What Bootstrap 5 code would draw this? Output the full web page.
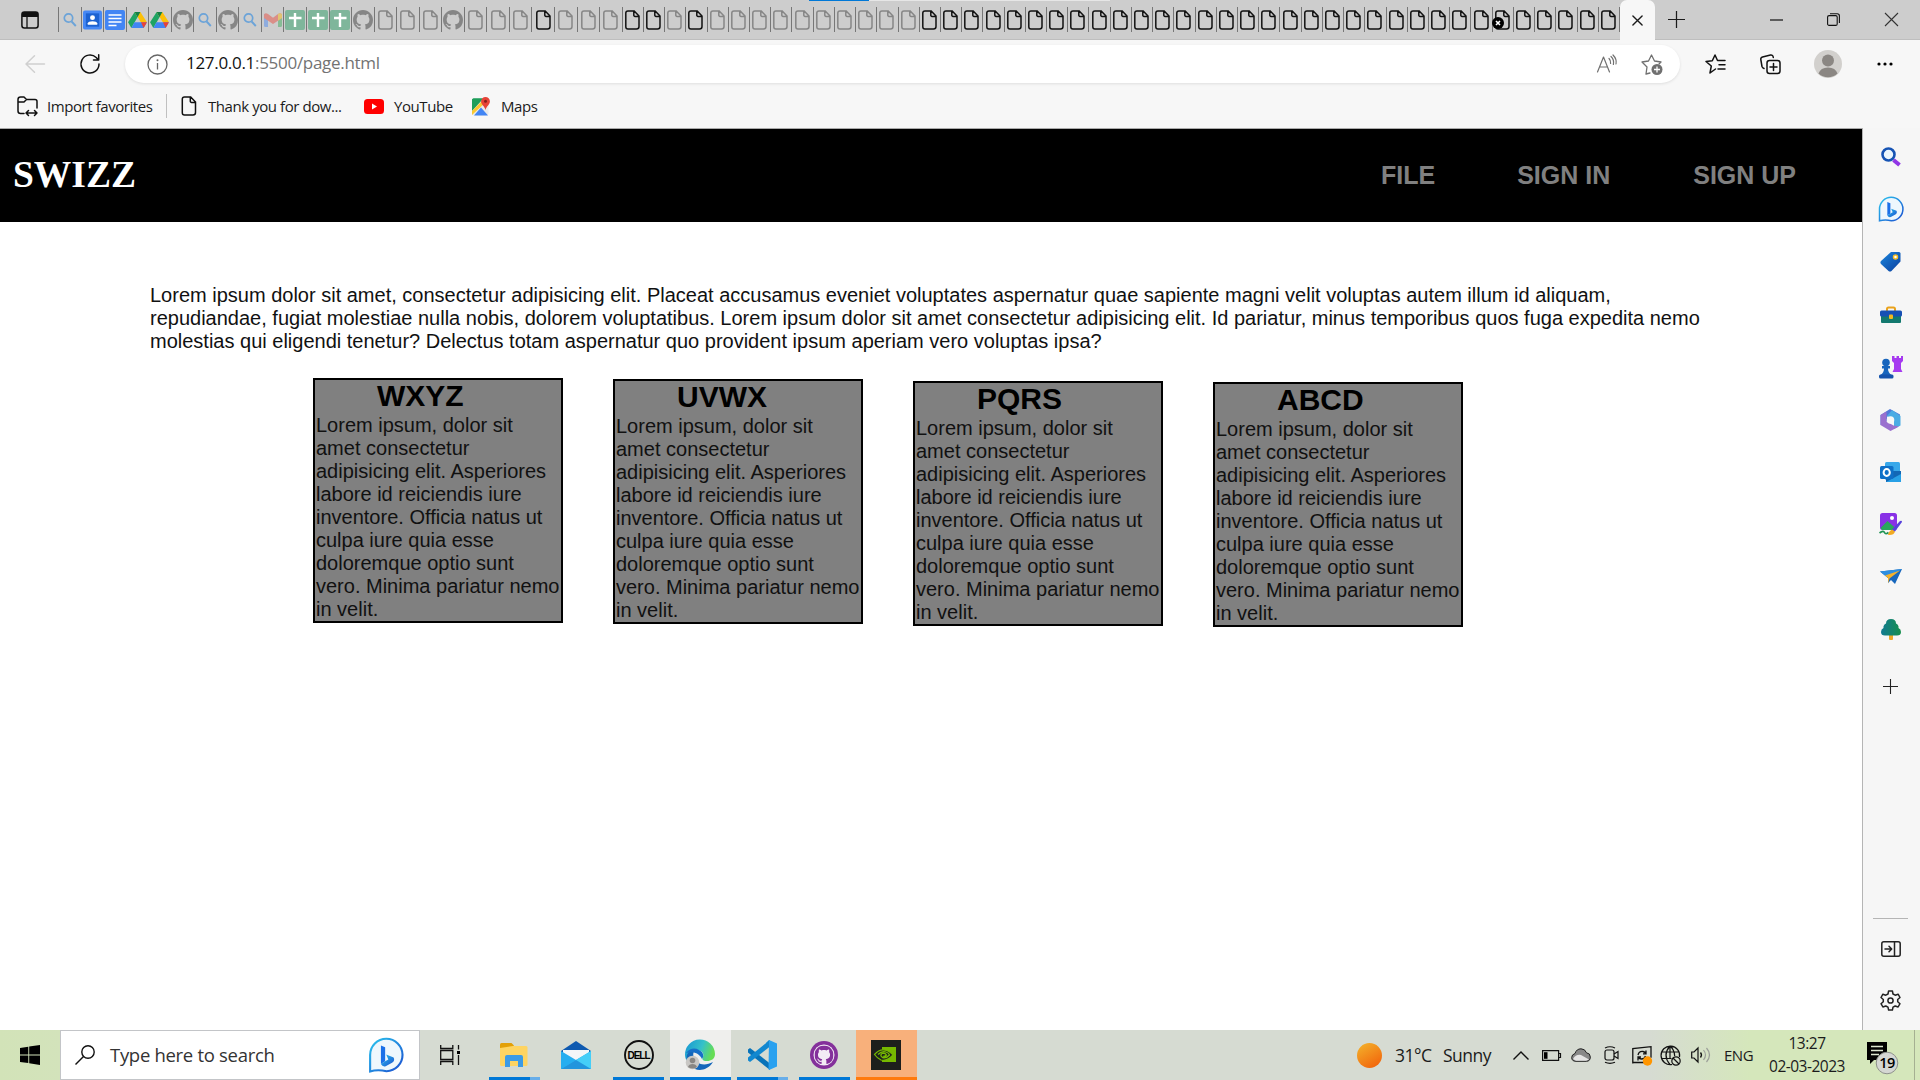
<!DOCTYPE html>
<html lang="en">
<head>
<meta charset="utf-8">
<title>page.html</title>
<link href="https://cdn.jsdelivr.net/npm/bootstrap@5.3.0/dist/css/bootstrap.min.css" rel="stylesheet">
<style>
body{width:1920px;height:1080px;overflow:hidden;font-family:"Open Sans","Noto Sans",sans-serif;color:#1b1b1b;background:#f7f7f7}
svg{display:block;flex:none;overflow:visible}
.ln{fill:none;stroke:currentColor;stroke-width:1.5;stroke-linecap:round;stroke-linejoin:round}
.slot{display:flex;align-items:center;justify-content:center;flex:none}
/* tab strip */
.tabstrip{height:40px;background:#cdcdcd;border-bottom:1px solid #bebebe;position:relative}
.tabmenu{width:58px}
.tabs{height:25px;border-left:1px solid #777}
.tabitem{border-right:1.5px solid #777;position:relative;height:25px}
.tabwide{width:22.55px}.tabslim{width:21.22px;padding-right:1px}
.tabdim{color:#868686}.tabdark{color:#111}
.tabfade{opacity:.45}
.tabactive{width:35px;height:40px;background:#f7f7f7;border-radius:7px 7px 0 0;margin-bottom:-1px}
.progressline{left:809px;top:0;width:301px;height:1px;background:#e6e6e6}
.progressline i{display:block;width:60px;height:1px;background:#0078d7}
.tabbadge{left:-1px;top:10px}
/* toolbar */
.toolbar{height:47px}
.address{width:1555px;height:38px;border-radius:19px;background:#fff;box-shadow:0 1px 3px rgba(0,0,0,.1);margin-top:1px}
.url{font-size:17px;letter-spacing:-.3px;width:1391px;color:#737373;white-space:pre;padding-bottom:2px}
.url b{font-weight:400;color:#111}
.favbar{height:41px;font-size:15px;letter-spacing:-.43px;padding-bottom:3px;white-space:nowrap}
.favbar span{display:block;flex:none}
/* browser content */
.pageview{width:1862px;height:902px;border-top:1px solid #a9a9a9;background:#fff;font-family:"Liberation Sans",Arial,sans-serif;color:#000}
.masthead{height:93px;background:#000;padding:0 66px 0 13px}
.brandname{font:bold 37.5px/43px "Liberation Serif","Times New Roman",serif;color:#fff;padding-bottom:2px}
.navlist{font-size:25px;font-weight:700;color:gray;gap:83px}
.navlist span:first-child{margin-right:-1px}
.bodycopy{font-size:20px;line-height:23px;margin:62px 150px 25px;color:#111}
.boxes{padding-left:313px;gap:50px}
.box{width:250px;height:245px;border:2px solid #000;background:gray;font-size:20px;line-height:23px;color:#111;padding-left:1px}
.box h2{font-size:30px;line-height:32px;font-weight:700;margin:0 0 2px 61px;color:#000}
.drop1{margin-top:1px}.drop2{margin-top:3px}.drop3{margin-top:4px}
.sidebar{width:58px;height:902px;border-left:1.5px solid #b5b5b5;background:#f6f6f6;padding-right:1.5px}
.sidebar .slot{height:52.5px}
.sidebar hr{width:35px;margin:0 auto;opacity:1;border-top:1px solid #b5b5b5}
/* taskbar */
.taskbar{height:50px;background:linear-gradient(90deg,#d2e3b8 0,#d3e3bb 60px,#d6dbd2 420px,#d6dbd2 1650px,#d5e7bb 1750px,#d5e7bb);}
.searchbox{width:360px;border:1px solid #c3c5c8;background:#fff;font-size:18.5px;color:#333;padding:0 15px 0 14px}
.searchbox span{letter-spacing:-.3px;width:255px;padding-left:15px}
.app{width:61px;position:relative}
.app i{position:absolute;bottom:0;height:3px;background:#0078d7;left:5px;width:51px}
.app i.full{left:0;width:61px}
.app i.multi{background:linear-gradient(90deg,#0078d7 41px,#68aee9 41px)}
.app i.alert-line{background:#ff7a0c}
.appactive{background:#efefed}.appalert{background:#f8b07b}
.tray{font-size:17.5px;color:#1b1b1b;letter-spacing:-.5px;white-space:nowrap}
.clock{font-size:15.5px;line-height:23px;width:82px;text-align:center}
</style>
<script src="https://cdn.jsdelivr.net/npm/bootstrap@5.3.0/dist/js/bootstrap.bundle.min.js"></script>
</head>
<body>
<svg width="0" height="0" class="position-absolute">
<defs>
<linearGradient id="gb" x1="0" y1="0" x2="1" y2="1"><stop offset="0" stop-color="#2ac4ee"/><stop offset="1" stop-color="#1b4fd0"/></linearGradient>
<linearGradient id="gblue" x1="0" y1="0" x2="1" y2="1"><stop offset="0" stop-color="#1b86dd"/><stop offset="1" stop-color="#0b3f9e"/></linearGradient>
<linearGradient id="gsun" x1="0" y1="0" x2=".6" y2="1"><stop offset="0" stop-color="#f3b52d"/><stop offset="1" stop-color="#f2690d"/></linearGradient>
<linearGradient id="gedge" x1="0" y1="0" x2="1" y2=".3"><stop offset="0" stop-color="#1795d4"/><stop offset=".6" stop-color="#35c1c9"/><stop offset="1" stop-color="#66dd55"/></linearGradient>
<linearGradient id="gtree" x1="0" y1="0" x2="1" y2="0"><stop offset="0" stop-color="#127a91"/><stop offset="1" stop-color="#168f4d"/></linearGradient>
<symbol id="doc" viewBox="0 0 15 20"><path d="M3 .9h6.2L14 6v10.6a2.5 2.5 0 0 1-2.500 2.500H3A2.300 2.300 0 0 1 .8 16.800V3.100A2.200 2.200 0 0 1 3 .9zM8.800 1v4.200a1.200 1.200 0 0 0 1.200 1.200h4" fill="none" stroke="currentColor" stroke-width="1.5"/></symbol>
<symbol id="mag" viewBox="0 0 16 16"><circle cx="6.500" cy="6" r="4.200" fill="none" stroke="#6ba3d8" stroke-width="1.700"/><path d="M9.600 9.500l4.200 4.500" stroke="#6ba3d8" stroke-width="1.900"/></symbol>
<symbol id="gh" viewBox="0 0 16 16"><path fill="currentColor" d="M8 0C3.580 0 0 3.580 0 8c0 3.540 2.290 6.530 5.470 7.590.4.070.55-.17.55-.38 0-.19-.01-.82-.01-1.490-2.010.37-2.530-.49-2.690-.94-.09-.23-.48-.94-.82-1.130-.28-.15-.68-.52-.01-.53.63-.01 1.080.58 1.230.82.72 1.210 1.870.87 2.330.66.07-.52.28-.87.51-1.070-1.780-.2-3.640-.89-3.640-3.950 0-.87.31-1.590.82-2.150-.08-.2-.36-1.020.08-2.120 0 0 .67-.21 2.200.82.640-.18 1.320-.27 2-.27s1.360.09 2 .27c1.530-1.040 2.200-.82 2.200-.82.440 1.100.160 1.920.080 2.120.510.560.820 1.270.820 2.150 0 3.070-1.870 3.750-3.650 3.950.290.250.540.730.540 1.480 0 1.070-.010 1.930-.010 2.200 0 .210.150.460.550.380A8.010 8.010 0 0 0 16 8c0-4.420-3.580-8-8-8z"/></symbol>
<symbol id="contact" viewBox="0 0 20 20"><rect width="20" height="20" rx="2" fill="#4688f4"/><rect x="3" y="3" width="14" height="14" fill="#1c62d1"/><circle cx="10" cy="7.500" r="2.600" fill="#fff"/><path d="M5 15v-1.500c0-3 10-3 10 0V15z" fill="#fff"/></symbol>
<symbol id="gdoc" viewBox="0 0 20 20"><rect width="20" height="20" rx="2" fill="#4285f4"/><path d="M3.500 5h13M3.500 8.500h13M3.500 12h13M3.500 15.500h8" stroke="#fff" stroke-width="1.700"/></symbol>
<symbol id="drive" viewBox="0 0 20 18"><path d="M7 1l3 5.500L3.500 18 0 12z" fill="#1fa463"/><path d="M7 1h6l7 11h-6.500z" fill="#fcc007"/><path d="M6.800 12H20l-3.500 6h-13z" fill="#4285f4"/><path d="M13.700 12H20l-3.500 6z" fill="#ea4335"/><path d="M7 1h6l-3 5.500z" fill="#138146"/></symbol>
<symbol id="gmail" viewBox="0 0 18 14"><path d="M0 1h4v13H1.500Q0 14 0 12.500z" fill="#4285f4"/><path d="M14 1h4v11.500q0 1.500-1.500 1.500H14z" fill="#34a853"/><path d="M0 2.500C0 0 2-.5 4 1l5 3.800L14 1c2-1.500 4-1 4 1.500V5l-9 6-9-6z" fill="#ea4335"/><path d="M14 1c2-1.500 4-1 4 1.500V5l-4 2.800z" fill="#fbbc04"/></symbol>
<symbol id="sheet" viewBox="0 0 20 20"><rect width="20" height="20" rx="2" fill="#7fb69b"/><path d="M10 3v14M4 8h12.500" stroke="#fff" stroke-width="2.400"/></symbol>
<symbol id="xmark" viewBox="0 0 12 12"><path class="ln" d="M1 1l10 10M11 1L1 11"/></symbol>
<symbol id="plus" viewBox="0 0 18 18"><path d="M9 0v18M0 9h18" stroke="currentColor" stroke-width="1.300"/></symbol>
<symbol id="bing" viewBox="0 0 34 34"><path d="M2 32.500V17A15.300 15.300 0 1 1 17.500 32.300Q9 30.500 2 32.500z" fill="#eef7fd" stroke="url(#gb)" stroke-width="2"/><path d="M12.200 8l4 1.600v13.200l-4 2.800z" fill="#1b70e8"/><path d="M12.200 25.600l4-2.800 3-1.600-2-4.600 7 2.700q1.500 3-1.500 5l-6 3.300q-3 .8-4.500-2z" fill="url(#gb)"/></symbol>
</defs>
</svg>

<header>
<div class="tabstrip d-flex align-items-center">
  <div class="position-absolute progressline"><i></i></div>
  <div class="slot tabmenu"><svg width="18" height="18" viewBox="0 0 18 18" style="margin-left:2px"><rect x=".9" y=".9" width="16.200" height="16.200" rx="2.500" class="ln" style="color:#111"/><path d="M1 1h16v5H1z" fill="#111"/><path d="M6 6v11" stroke="#111" stroke-width="1.300"/></svg></div>
  <div class="tabs d-flex" id="tabs"></div>
  <div class="slot tabactive align-self-end"><svg width="11" height="11"><use href="#xmark"/></svg></div>
  <div class="slot" style="width:43px"><svg width="17" height="17"><use href="#plus"/></svg></div>
  <div class="d-flex ms-auto">
    <div class="slot" style="width:57px"><svg width="13" height="2"><path d="M0 1h13" stroke="#111" stroke-width="1.200"/></svg></div>
    <div class="slot" style="width:57px"><svg width="13" height="13" viewBox="0 0 13 13"><rect x=".6" y="2.600" width="9.600" height="9.800" rx="1.500" fill="none" stroke="#111" stroke-width="1.100"/><path d="M3 .7h7.200q2.200 0 2.200 2.200V10" fill="none" stroke="#111" stroke-width="1.100"/></svg></div>
    <div class="slot" style="width:58px"><svg width="13" height="13" viewBox="0 0 13 13"><path d="M0 0l13 13M13 0L0 13" stroke="#333" stroke-width="1.100"/></svg></div>
  </div>
</div>
<div class="toolbar d-flex align-items-center">
  <div class="slot" style="width:70px"><svg width="20" height="18" viewBox="0 0 20 18" style="color:#d0d0d0"><path class="ln" d="M19.500 9H1M9.500 .8L1 9l8.500 8.200"/></svg></div>
  <div class="slot" style="width:40px"><svg width="20" height="20" viewBox="0 0 20 20" style="color:#111"><path class="ln" d="M19 10a9 9 0 1 1-2.800-6.500L18.500 6M18.700 .8V6h-5.200"/></svg></div>
  <div class="slot" style="width:15px"></div>
  <div class="address d-flex align-items-center">
    <div class="slot" style="width:61px;padding-left:3px"><svg width="21" height="21" viewBox="0 0 21 21"><circle cx="10.500" cy="10.500" r="9.500" fill="none" stroke="#666" stroke-width="1.300"/><path d="M10.500 9v6.500" stroke="#666" stroke-width="1.300"/><circle cx="10.500" cy="6.300" r="1" fill="#666"/></svg></div>
    <div class="url"><b>127.0.0.1</b>:5500/page.html</div>
    <div class="slot" style="width:60px"><svg width="20" height="18" viewBox="0 0 20 18" style="color:#707070"><path class="ln" style="stroke-width:1.200" d="M.5 17L6.500 2l6 15M2.700 12h7.800M12 3.500q2 2 1.600 5M14 1.500q3.300 3 2.400 8M16 0q4 4 3 9"/></svg></div>
    <div class="slot" style="width:30px"><svg width="22" height="21" viewBox="0 0 22 21" style="color:#707070"><path class="ln" style="stroke-width:1.300" d="M9 19l-4 1 1-7-5-5 6.500-1L10.500 1l3 6 6.500 1-2 2"/><circle cx="16" cy="15.500" r="5.500" fill="#707070"/><path d="M16 12.500v6M13 15.500h6" stroke="#fff" stroke-width="1.300"/></svg></div>
  </div>
  <div class="slot" style="width:70px;color:#111"><svg width="21" height="20" viewBox="0 0 21 20"><path class="ln" d="M10.500 15l-5.500 4 1.300-7L1 7.500l6.300-.7L10 1l2.500 5.500H20M14 10.800h6M13 15h7"/></svg></div>
  <div class="slot" style="width:40px;color:#111"><svg width="21" height="20" viewBox="0 0 21 20"><rect class="ln" x="7" y="6.500" width="13" height="13" rx="2.500"/><path class="ln" d="M13.500 9.500v7M10 13h7M4 14.500q-1.500-.5-2-2L.8 5.500Q.6 3.500 2.500 3l8-2q2.500-.3 2.800 2.500"/></svg></div>
  <div class="slot" style="width:76px"><svg width="28" height="28" viewBox="0 0 28 28"><circle cx="14" cy="14" r="14" fill="#d2d0cd"/><circle cx="14" cy="10.500" r="6" fill="#8b8783"/><path d="M4.500 23.500q2-6 9.500-6t9.500 6A14 14 0 0 1 4.500 23.500z" fill="#8b8783"/></svg></div>
  <div class="slot" style="width:38px"><svg width="16" height="4"><circle cx="2" cy="2" r="1.600"/><circle cx="8" cy="2" r="1.600"/><circle cx="14" cy="2" r="1.600"/></svg></div>
</div>
<div class="favbar d-flex align-items-center">
  <div class="slot" style="width:47px;padding-left:8px;color:#111"><svg width="21" height="20" viewBox="0 0 21 20"><path class="ln" d="M7 17.500H3.500Q1 17.500 1 15V3.500Q1 1 3.500 1H7l2.500 2.500H18Q20 3.500 20 5.500V12M1 6h6l2.500-2.500M9 17h11M11.500 14.500L9 17l2.500 2.500M17.500 14.500L20 17l-2.500 2.500"/></svg></div>
  <span style="width:119px">Import favorites</span>
  <div class="vr" style="height:24px;align-self:center"></div>
  <div class="slot" style="width:41px;padding-left:3px;color:#111"><svg width="16" height="20"><use href="#doc"/></svg></div>
  <span style="width:156px">Thank you for dow...</span>
  <svg width="20" height="15" viewBox="0 0 20 15"><rect width="20" height="15" rx="3.500" fill="#f00"/><path d="M8 4.500v6l5-3z" fill="#fff"/></svg>
  <span style="width:88px;padding-left:10px">YouTube</span>
  <svg width="18" height="19" viewBox="0 0 18 19"><rect y="1.500" width="16.500" height="17" rx="2" fill="#e9eaea"/><path d="M0 3q0-1.500 1.500-1.500h10L0 14z" fill="#1e9e5a"/><path d="M2 18.500l7-8 7 8z" fill="#4285f4"/><path d="M0 14L12 2l2 3L0 18z" fill="#fbc82f"/><path d="M0 3q0-1.500 1.500-1.500h9L0 11z" fill="#1e9e5a"/><path d="M13.500 0a4.400 4.400 0 0 1 4.400 4.500c0 3-3.400 4.500-4.400 8.500-1-4-4.400-5.500-4.400-8.500A4.400 4.400 0 0 1 13.500 0z" fill="#e64337"/><circle cx="13.500" cy="4.300" r="1.500" fill="#85201a"/></svg>
  <span style="padding-left:11px">Maps</span>
</div>
</header>

<div class="d-flex">
<main class="pageview">
  <nav class="masthead d-flex align-items-center justify-content-between">
    <div class="brandname">SWIZZ</div>
    <div class="navlist d-flex"><span>FILE</span><span>SIGN IN</span><span>SIGN UP</span></div>
  </nav>
  <p class="bodycopy">Lorem ipsum dolor sit amet, consectetur adipisicing elit. Placeat accusamus eveniet voluptates aspernatur quae sapiente magni velit voluptas autem illum id aliquam, repudiandae, fugiat molestiae nulla nobis, dolorem voluptatibus. Lorem ipsum dolor sit amet consectetur adipisicing elit. Id pariatur, minus temporibus quos fuga expedita nemo molestias qui eligendi tenetur? Delectus totam aspernatur quo provident ipsum aperiam vero voluptas ipsa?</p>
  <div class="boxes d-flex align-items-start">
    <div class="box"><h2>WXYZ</h2>Lorem ipsum, dolor sit amet consectetur adipisicing elit. Asperiores labore id reiciendis iure inventore. Officia natus ut culpa iure quia esse doloremque optio sunt vero. Minima pariatur nemo in velit.</div>
    <div class="box drop1"><h2>UVWX</h2>Lorem ipsum, dolor sit amet consectetur adipisicing elit. Asperiores labore id reiciendis iure inventore. Officia natus ut culpa iure quia esse doloremque optio sunt vero. Minima pariatur nemo in velit.</div>
    <div class="box drop2"><h2>PQRS</h2>Lorem ipsum, dolor sit amet consectetur adipisicing elit. Asperiores labore id reiciendis iure inventore. Officia natus ut culpa iure quia esse doloremque optio sunt vero. Minima pariatur nemo in velit.</div>
    <div class="box drop3"><h2>ABCD</h2>Lorem ipsum, dolor sit amet consectetur adipisicing elit. Asperiores labore id reiciendis iure inventore. Officia natus ut culpa iure quia esse doloremque optio sunt vero. Minima pariatur nemo in velit.</div>
  </div>
</main>
<aside class="sidebar d-flex flex-column">
  <div class="slot" style="margin-top:3px"><svg width="20" height="20" viewBox="0 0 20 20"><circle cx="7.500" cy="7.500" r="6" fill="#eaf6fd" stroke="#1553b4" stroke-width="2.600"/><path d="M12.500 13l6 5" stroke="#9136e6" stroke-width="4"/></svg></div>
  <div class="slot" style="height:51.5px"><svg width="26" height="26"><use href="#bing"/></svg></div>
  <div class="slot"><svg width="21" height="21" viewBox="0 0 21 21"><path d="M11 1h8q1.500 0 1.500 1.500v8L11.500 20q-1.500 1.200-3 0L1 13q-1.200-1.500 0-3z" fill="url(#gblue)"/><circle cx="15.500" cy="6" r="2" fill="#fff" stroke="#f6bd24" stroke-width="1.500"/></svg></div>
  <div class="slot" style="height:54px"><svg width="22" height="18" viewBox="0 0 22 18"><path d="M7 5V3q0-1.500 1.500-1.500h5Q15 1.500 15 3v2" fill="none" stroke="#e9a21c" stroke-width="2"/><rect x="1" y="9" width="20" height="8" rx="1" fill="#13796f"/><rect y="4.500" width="22" height="6" rx="1.500" fill="#1750b4"/><rect x="9" y="8.500" width="4" height="4.500" rx="1" fill="#f5b81f"/></svg></div>
  <div class="slot" style="height:52px"><svg width="23" height="23" viewBox="0 0 23 23"><path d="M13 0h2.500v2h2V0h2.500v2h2V0H24v5l-2 2v6l1.500 3H13.500L15 13V7l-2-2z" fill="#a63af0"/><circle cx="7" cy="6.500" r="3.800" fill="#1865bd"/><path d="M3 10h8v2.500H9q0 4 3.500 6.500H1.500Q5 16.500 5 12.500H3z" fill="#1865bd"/><rect y="18.500" width="14.500" height="4" rx="1.500" fill="#1553ac"/></svg></div>
  <div class="slot"><svg width="21" height="22" viewBox="0 0 21 22"><path d="M10 0l10 5.500v6l-6-3.500-4-2-3 1.800V12L.5 16V6z" fill="#5279d8"/><path d="M20.500 7v9.500L14 20V11L7 7l5-6z" fill="#4babe4"/><path d="M.5 6l6-3.500v10l7 4 5.500 1-8.500 4.500L.5 16z" fill="#9a70cf"/><circle cx="10.500" cy="11" r="3.800" fill="#f7f7f7"/></svg></div>
  <div class="slot"><svg width="21" height="21" viewBox="0 0 21 21"><rect x="5" width="15" height="18" rx="1.500" fill="#38a8ea"/><path d="M12 9h9v11H6v-4z" fill="#1267b5"/><path d="M6 20l15-8v8z" fill="#28a0e6"/><rect y="4" width="13.500" height="13" rx="1.500" fill="#0e70c8"/><ellipse cx="6.700" cy="10.500" rx="3.100" ry="3.400" fill="none" stroke="#fff" stroke-width="2"/></svg></div>
  <div class="slot"><svg width="23" height="23" viewBox="0 0 23 23"><rect x="1" width="17" height="17" rx="2.500" fill="#8931e6"/><circle cx="13" cy="5" r="2" fill="#fff"/><path d="M1.500 15l7-7 9 8-2 1H3z" fill="#2aa65d"/><path d="M.5 20q4-3 5-.5t4 0" fill="none" stroke="#209454" stroke-width="1.700"/><path d="M9 22q1-5 5-5.500l2 2q-1 4-7 3.500z" fill="#f2aa22"/><path d="M13 16.500L21 8q2-1 2 1l-7 9.500z" fill="#5740db"/></svg></div>
  <div class="slot"><svg width="22" height="16" viewBox="0 0 22 16"><path d="M0 2.500L22 0 15 15l-4-4-3 3V9z" fill="#1767bd"/><path d="M0 2.500L22 0 8 9z" fill="#2d8ee0"/><path d="M5 6.500L20 1.500 9.500 9.500 8 14.500V9z" fill="#f3b12c"/></svg></div>
  <div class="slot"><svg width="20" height="21" viewBox="0 0 20 21"><rect x="8" y="14" width="4" height="7" rx="1" fill="#eda927"/><path d="M10 0q5 0 5 4.500Q18 6 17.500 9q2.500 1 2.500 4 0 3.500-4 3.500H4Q0 16.500 0 13q0-3 2.500-4Q2 6 5 4.500 5 0 10 0z" fill="url(#gtree)"/></svg></div>
  <div class="slot" style="height:60px"><svg width="15" height="15" viewBox="0 0 18 18" style="color:#222"><use href="#plus"/></svg></div>
  <hr style="margin-top:202px">
  <div class="slot" style="height:59px;color:#222"><svg width="20" height="16" viewBox="0 0 20 16"><rect class="ln" x=".8" y=".8" width="18.400" height="14.400" rx="2"/><path class="ln" d="M13.500 1v14M4 8h6.500M8 5.300L10.700 8 8 10.700"/></svg></div>
  <div class="slot" style="height:45px;color:#222"><svg width="21" height="21" viewBox="0 0 21 21"><path class="ln" d="M8.600 1h3.800l.6 3 2.200 1.200 2.900-1 1.900 3.300-2.300 2v2.200l2.300 2-1.900 3.300-2.900-1L13 17.200l-.6 2.900H8.600L8 17.200 5.800 16l-2.900 1L1 13.700l2.300-2V9.500L1 7.500l1.900-3.300 2.900 1L8 4z"/><circle class="ln" cx="10.500" cy="10.500" r="2.600"/></svg></div>
</aside>
</div>

<footer class="taskbar d-flex">
  <div class="slot" style="width:60px"><svg width="20" height="20" viewBox="0 0 20 20"><path d="M0 3l8.300-1.200v7.700H0zM9.200 1.600L20 0v9.500H9.200zM0 10.400h8.300V18L0 16.900zM9.200 10.400H20V20L9.200 18.300z"/></svg></div>
  <div class="searchbox d-flex align-items-center"><svg width="20" height="20" viewBox="0 0 20 20"><circle cx="13" cy="7" r="6.200" fill="none" stroke="#111" stroke-width="1.400"/><path d="M8.500 11.500L.5 19.500" stroke="#111" stroke-width="1.400"/></svg><span class="flex-shrink-0 text-nowrap">Type here to search</span><svg width="36" height="36" style="margin-left:18px"><use href="#bing"/></svg></div>
  <div class="slot" style="width:60px"><svg width="21" height="20" viewBox="0 0 21 20"><path d="M.7 0v3.500h12.100V0M.7 20v-3.500h12.100V20M.7 5.500h12.100v9H.7zM18.500 0v4.500M18.500 10v10" fill="none" stroke="#111" stroke-width="1.300"/><rect x="17" y="6" width="3" height="3"/></svg></div>
  <div class="slot app" style="margin-left:4px"><svg width="28" height="24" viewBox="0 0 28 24" style="margin-right:2px"><path d="M0 1.500Q0 0 1.500 0h10L14 2.500V5H0z" fill="#e3a008"/><path d="M0 5l13-2h13q1.500 0 1.500 1.500v17q0 1.500-1.500 1.500H1.500Q0 23 0 21.500z" fill="#fed462"/><path d="M5 24V14q0-2 2-2h14q2 0 2 2v10h-5v-6h-8v6z" fill="#3c9be6"/></svg><i class="multi"></i></div>
  <div class="slot app"><svg width="30" height="28" viewBox="0 0 30 28"><path d="M0 10L15 0l15 10v6H0z" fill="#0f5ab0"/><path d="M2 9h26v8l-13 5L2 17z" fill="#f4f6f8"/><path d="M0 10l15 9 15-9v18H0z" fill="#27aef0"/><path d="M0 28l15-9 15-9v18z" fill="#45cef8"/><path d="M15 19l15 9H0z" fill="#1a87d6" opacity=".8"/></svg></div>
  <div class="slot app" style="margin-left:2px"><svg width="30" height="30" viewBox="0 0 30 30"><circle cx="15" cy="15" r="14" fill="none" stroke="#111" stroke-width="1.900"/><text x="15" y="18.700" font-family="Liberation Sans" font-weight="700" font-size="10" text-anchor="middle" textLength="23">DELL</text></svg><i></i></div>
  <div class="slot app appactive" style="margin-left:1px"><svg width="30" height="30" viewBox="0 0 30 30" style="margin-right:2px"><path d="M0 15A15 15 0 0 1 30 14c0 5-4 7-8 7-5 0-5-2-4-4 2-6-5-8-9-6-5 1-7 6-5 12Q0 20 0 15z" fill="url(#gedge)"/><path d="M2 21C0 13 6 9 10 10c-2 2-3 7 1 11 5 5 11 4 17 1-5 8-13 9-18 7-4-2-7-4-8-8z" fill="#1466ba"/><path d="M1 13Q7 6 14 10c5 2 5 7 3 9-4-8-12-7-16-6z" fill="#176fc8"/><circle cx="7.500" cy="22.500" r="6.800" fill="#c9c7c4"/><circle cx="7.500" cy="20.500" r="2.800" fill="#898683"/><path d="M3 27q1-3 4.500-3t4.500 3q-4 3-9 0z" fill="#898683"/></svg><i class="full"></i></div>
  <div class="slot app"><svg width="30" height="30" viewBox="0 0 30 30"><path d="M1 9.500L3 8l20 15.500V30L1 12.500z" fill="#0873b9"/><path d="M1 20.500L3 22 23 6.500V0L1 17.500z" fill="#1288d0"/><path d="M22 0l8 3.500v23L22 30l-.5-1z" fill="#2aa1ef"/><path d="M22 0l-3 3 3 4.500z" fill="#1288d0"/></svg><i class="multi" style="left:6px"></i></div>
  <div class="slot app" style="margin-left:1px"><svg width="28" height="28" viewBox="0 0 28 28"><circle cx="14" cy="14" r="14" fill="#84309b"/><circle cx="14" cy="14" r="10.500" fill="#f3ebf5"/><svg x="4.500" y="4.500" width="19" height="19" style="color:#84309b"><use href="#gh"/></svg></svg><i style="left:6px"></i></div>
  <div class="slot app appalert" style="margin-left:2px"><svg width="30" height="30" viewBox="0 0 30 30" style="margin-right:1px"><rect width="30" height="30" fill="#1d1f1c"/><path d="M11 7h14v15H11z" fill="#76b900"/><path d="M3.500 14.500Q9 8 16 10.500q4 2 6 4.500-6 6.500-12 5-4-2-6.500-5.500z" fill="#1d1f1c" stroke="#76b900" stroke-width="1.200"/><path d="M7 14.500q4-4 8-2.500 3 1 3.500 3-3 3.500-7 2.500-3-2-.500-4 3-1 4.500 1.500-2 2-3.500 1" fill="none" stroke="#76b900" stroke-width="1.300"/></svg><i class="full alert-line"></i></div>
  <div class="tray d-flex align-items-center ms-auto">
    <svg width="25" height="25" style="margin-right:13px"><circle cx="12.500" cy="12.500" r="12.500" fill="url(#gsun)"/></svg>
    <span style="width:48px">31°C</span><span style="width:68px">Sunny</span>
    <div class="slot" style="width:20px"><svg width="16" height="9" viewBox="0 0 16 9"><path d="M.5 8.500L8 1l7.500 7.500" fill="none" stroke="#111" stroke-width="1.400"/></svg></div>
    <div class="slot" style="width:40px"><svg width="19" height="11" viewBox="0 0 19 11"><path d="M.6.600h16v9.800H.6zM17 3.500h1.500v4H17" fill="none" stroke="#111" stroke-width="1.200"/><rect x="2" y="2.200" width="3.500" height="6.600"/></svg></div>
    <div class="slot" style="width:20px"><svg width="20" height="14" viewBox="0 0 20 14"><path d="M5 13.300Q.7 13.300.7 9.500q0-3 3.300-4Q5.500.8 10 .8q4 0 5.500 4 3.800.4 3.800 4.200 0 4.300-4 4.300z" fill="#898989" stroke="#222"/><path d="M2 11q3-5 8-4l8 4.500-3 1.300H5z" fill="#e5e5e5"/></svg></div>
    <div class="slot" style="width:42px"><svg width="16" height="18" viewBox="0 0 16 18"><rect x="1" y="4" width="9" height="10" rx="2" fill="none" stroke="#111" stroke-width="1.200"/><path d="M10 8l4-2.500v7L10 10M1 2Q6-.5 11 2M1 16.300q5 2.200 10 0" fill="none" stroke="#111" stroke-width="1.200"/></svg></div>
    <div class="slot" style="width:17px"><svg width="20" height="19" viewBox="0 0 20 19"><path d="M.8 17.500V2.500L19 .7v11M.8 16.500h12M6 9q1-4 5-3.500 2 .5 3 2M14 4.500v3.300h-3M13.500 10q-1 3-4 3-2 0-3.500-2M6 14.500V11h3" fill="none" stroke="#111" stroke-width="1.300"/><circle cx="15.500" cy="15" r="4.700" fill="#ff9500"/></svg></div>
    <div class="slot" style="width:41px"><svg width="21" height="21" viewBox="0 0 21 21"><g fill="none" stroke="#111" stroke-width="1.200"><path d="M12 19.500A9.300 9.300 0 1 1 19.500 12M10 1Q2 10 10 19.700M10 1q4.500 4 4.700 10M1.500 7h17.300M1.500 13.500h10M10 1v12"/><circle cx="16" cy="16" r="4.200"/><path d="M13 13l6 6"/></g></svg></div>
    <div class="slot" style="width:20px"><svg width="20" height="16" viewBox="0 0 20 16"><path d="M.7 5H3l4-4v14l-4-4H.7z" fill="none" stroke="#111" stroke-width="1.200"/><path d="M9.500 5.500q2 2.500 0 5" fill="none" stroke="#111" stroke-width="1.300"/><path d="M12.500 3q4 5 0 10M15.500 1q6 7 0 14" fill="none" stroke="#9b9e99" stroke-width="1.200"/></svg></div>
    <div style="width:55px;padding-left:13px;font-size:15px">ENG</div>
    <div class="clock">13:27<br>02-03-2023</div>
    <div class="slot" style="width:66px;padding-left:6px"><svg width="34" height="32" viewBox="0 0 34 32"><path d="M0 3h20v18H7l-4 4v-4H0z"/><path d="M4 7.500h12M4 11.500h12M4 15.500h8" stroke="#dce5cf" stroke-width="1.500"/><circle cx="20" cy="24" r="10.800" fill="#d5d7d3" stroke="#8d918a"/><text x="20" y="29" text-anchor="middle" font-size="14.500" font-weight="600" letter-spacing="-.5">19</text></svg></div>
    <div style="width:6px;height:50px;border-left:1px solid #a5b092"></div>
  </div>
</footer>
<script>
// one letter per tab: m search, c contacts, g document, v drive, h code host, l mail, s sheet, d dim page, k dark page, x crashed page
var wide = "mcgvvhmhmlssshdddhdddkddd", slim = "kkdk" + "d".repeat(10) + "k".repeat(27) + "x" + "k".repeat(5);
var art = {m:["mag",16,16,""],c:["contact",19,20,""],g:["gdoc",20,20,""],v:["drive",19,17,""],h:["gh",20,20,"tabdim"],l:["gmail",18,14,"tabfade"],s:["sheet",20,20,""],d:["doc",15,20,"tabdim"],k:["doc",15,20,"tabdark"],x:["doc",15,20,"tabdark"]};
function tab(ch, size){
  var a = art[ch];
  return '<div class="tabitem slot ' + size + '"><svg class="' + a[3] + '" width="' + a[1] + '" height="' + a[2] + '"><use href="#' + a[0] + '"/></svg>' +
    (ch === "x" ? '<svg class="position-absolute tabbadge" width="12" height="12" viewBox="0 0 12 12"><circle cx="6" cy="6" r="6"/><path d="M4 4l4 4M8 4L4 8" stroke="#fff" stroke-width="1.600"/></svg>' : '') + '</div>';
}
document.getElementById("tabs").innerHTML = [...wide].map(c => tab(c, "tabwide")).join("") + [...slim].map(c => tab(c, "tabslim")).join("");
</script>
</body>
</html>
